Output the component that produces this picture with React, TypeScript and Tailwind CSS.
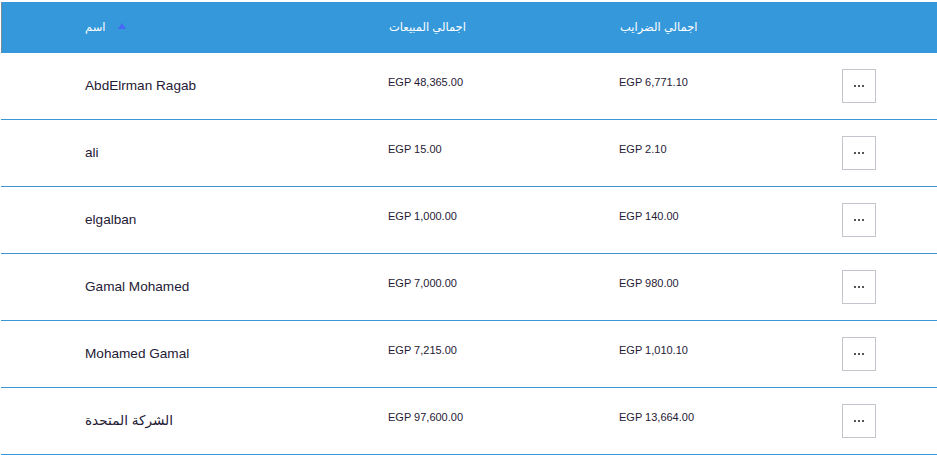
import React from "react";

const rows = [
  { name: "AbdElrman Ragab", sales: "EGP 48,365.00", tax: "EGP 6,771.10" },
  { name: "ali", sales: "EGP 15.00", tax: "EGP 2.10" },
  { name: "elgalban", sales: "EGP 1,000.00", tax: "EGP 140.00" },
  { name: "Gamal Mohamed", sales: "EGP 7,000.00", tax: "EGP 980.00" },
  { name: "Mohamed Gamal", sales: "EGP 7,215.00", tax: "EGP 1,010.10" },
  { name: "الشركة المتحدة", sales: "EGP 97,600.00", tax: "EGP 13,664.00" },
];

const font = { fontFamily: '"Liberation Sans", "DejaVu Sans", sans-serif' };

export default function App() {
  return (
    <div className="w-[937px] h-[455px] bg-white pt-[2px] pl-px overflow-hidden" style={font}>
      <div className="grid grid-cols-[387px_231px_223px_1fr] h-[51px] bg-[#3598db] text-white text-[11.5px] border-l border-[#7a8a99]">
        <div className="flex items-center pl-[83px] gap-[13px]">
          <span>اسم</span>
          <svg width="8" height="6" viewBox="0 0 8 6" className="mt-[-3px]">
            <polygon points="4,0 8,6 0,6" fill="#4867f5" />
          </svg>
        </div>
        <div className="flex items-center">اجمالي المبيعات</div>
        <div className="flex items-center">اجمالي الضرايب</div>
        <div />
      </div>
      {rows.map((r, i) => (
        <div
          key={i}
          className="grid grid-cols-[387px_231px_223px_1fr] h-[67px] border-b border-[#3d97d6] text-[#1f2036]"
        >
          <div className="flex items-center pl-[84px] text-[13.6px]">{r.name}</div>
          <div className="flex items-center text-[11px] pb-[8px]">{r.sales}</div>
          <div className="flex items-center text-[11px] pb-[8px]">{r.tax}</div>
          <div className="flex items-center">
            <button className="w-[34px] h-[34px] border border-[#c4c4cc] bg-white flex items-center justify-center gap-[2px]">
              <span className="w-[2px] h-[2px] bg-[#555]" />
              <span className="w-[2px] h-[2px] bg-[#555]" />
              <span className="w-[2px] h-[2px] bg-[#555]" />
            </button>
          </div>
        </div>
      ))}
    </div>
  );
}
